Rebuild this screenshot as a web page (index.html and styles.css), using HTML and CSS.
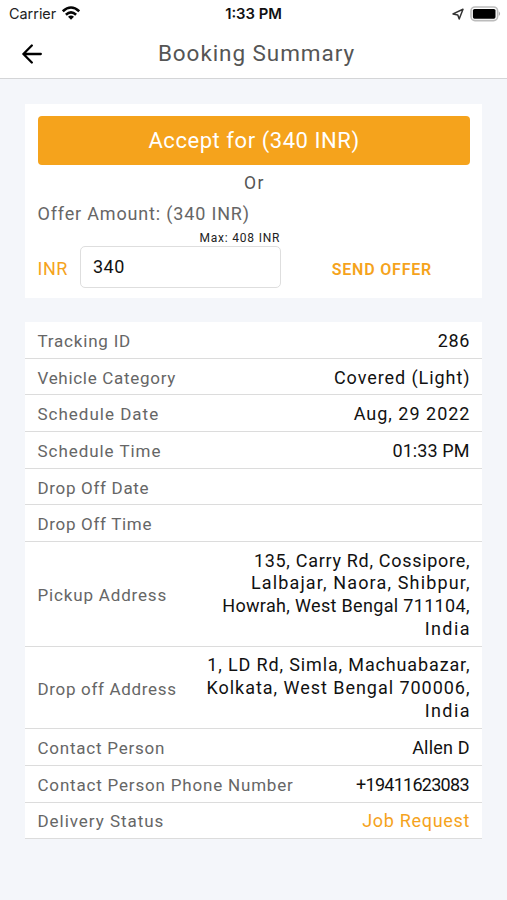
FILE: index.html
```
<!DOCTYPE html>
<html lang="en">
<head>
<meta charset="utf-8">
<meta name="viewport" content="width=device-width, initial-scale=1">
<title>Booking Summary</title>
<link rel="stylesheet" href="styles.css">
</head>
<body>
<header class="top">
  <div class="status">
    <div class="carrier"><span class="carrier-name">Carrier</span>
      <svg class="wifi" viewBox="0 0 18 14"><g fill="none" stroke="#050505" stroke-width="2.6"><path d="M.8 5.3Q9-2.3 17.2 5.3"/><path d="M3.9 8.7Q9 4.1 14.1 8.7"/></g><path d="M6 10.7Q9 8.3 12 10.7L9 13.7Z" fill="#050505"/></svg>
    </div>
    <div class="clock"><span>1:33 PM</span></div>
    <div class="indicators">
      <svg class="location" viewBox="0 0 12 12"><path d="M1 5.9L11 1.2L7.2 10.9L5.8 6.9Z" fill="none" stroke="#333" stroke-width="1.5" stroke-linejoin="round"/></svg>
      <svg class="battery" viewBox="0 0 31 16"><rect x="1" y="1" width="26.6" height="13.6" rx="4" fill="#fff" stroke="#bcbcbc" stroke-width="1.6"/><rect x="2.9" y="2.9" width="22.6" height="9.8" rx="1.6" fill="#000"/><path d="M28.8 5.3Q31.4 7.7 28.8 10.1Z" fill="#aaa"/></svg>
    </div>
  </div>
  <div class="nav">
    <svg class="back" viewBox="0 0 20 20"><path d="M18.8 10H1.4M9.8 1.5L1.4 10L9.8 18.5" fill="none" stroke="#000" stroke-width="2.3" stroke-linecap="round" stroke-linejoin="round"/></svg>
    <h1><span>Booking Summary</span></h1>
  </div>
</header>
<main>
  <section class="offer">
    <button class="accept"><span>Accept for (340 INR)</span></button>
    <p class="or"><span>Or</span></p>
    <p class="amount"><span>Offer Amount: (340 INR)</span></p>
    <p class="max"><span>Max: 408 INR</span></p>
    <div class="bid">
      <div class="currency"><span>INR</span></div>
      <div class="field"><span>340</span></div>
      <div class="send"><span>SEND OFFER</span></div>
    </div>
  </section>
  <section class="details">
    <div class="row tracking"><span class="label">Tracking ID</span><span class="value">286</span></div>
    <div class="row vehicle"><span class="label">Vehicle Category</span><span class="value">Covered (Light)</span></div>
    <div class="row date"><span class="label">Schedule Date</span><span class="value">Aug, 29 2022</span></div>
    <div class="row time"><span class="label">Schedule Time</span><span class="value">01:33 PM</span></div>
    <div class="row drop"><span class="label">Drop Off Date</span></div>
    <div class="row drop"><span class="label">Drop Off Time</span></div>
    <div class="row pickup"><span class="label">Pickup Address</span><div class="lines"><span>135, Carry Rd, Cossipore,</span><span>Lalbajar, Naora, Shibpur,</span><span>Howrah, West Bengal 711104,</span><span>India</span></div></div>
    <div class="row dropoff"><span class="label">Drop off Address</span><div class="lines"><span>1, LD Rd, Simla, Machuabazar,</span><span>Kolkata, West Bengal 700006,</span><span>India</span></div></div>
    <div class="row person"><span class="label">Contact Person</span><span class="value">Allen D</span></div>
    <div class="row phone"><span class="label">Contact Person Phone Number</span><span class="value">+19411623083</span></div>
    <div class="row delivery"><span class="label">Delivery Status</span><span class="value job">Job Request</span></div>
  </section>
</main>
</body>
</html>
```
FILE: styles.css
```
* { box-sizing: border-box; }
body { margin: 0; background: #f4f6fa; font-family: Roboto, "Liberation Sans", sans-serif; color: #111; }
p, h1 { margin: 0; font-weight: 400; }

/* The negative margin drops the tracking after the last letter. */
span { --track: 0px; white-space: nowrap; letter-spacing: var(--track); margin-right: calc(-1 * var(--track)); }

.top { height: 79px; background: #fff; border-bottom: 1.5px solid #d4d5d7; }
.status { display: grid; grid-template-columns: 1fr 1fr 1fr; height: 28px; align-items: center; padding: 0 6px 0 9px; }
.carrier { display: flex; align-items: center; gap: 6px; font: 14.4px/28px Inter, sans-serif; color: #222; }
.wifi { width: 18px; height: 14px; margin-top: -2px; }
.clock { text-align: center; font: 600 14.8px/28px Inter, sans-serif; margin-left: -3px; }
.indicators { display: flex; justify-content: flex-end; align-items: center; gap: 6px; }
.location { width: 12px; height: 12px; }
.battery { width: 31px; height: 16px; margin-top: -1px; }
.nav { display: grid; grid-template-columns: 60px 1fr 55px; height: 50px; align-items: center; }
.back { width: 20px; height: 20px; margin: 1px 0 0 22px; }
h1 { text-align: center; font-size: 22.5px; line-height: 51px; color: #555; }
h1 span { --track: .93px; }

main { padding: 25px 25px 0; }
.offer { height: 194px; padding: 12px 12px 0 12.5px; background: #fff; }
.accept { display: block; width: 100%; height: 49px; border: 0; border-radius: 4px; background: #f5a31c; color: #fff; font: 22px/49px Roboto, sans-serif; padding: 0; }
.accept span { --track: .55px; }
.or { text-align: center; font-size: 17.5px; line-height: 37px; color: #555; }
.or span { --track: 1.5px; }
.amount { font-size: 18px; line-height: 24px; color: #666; }
.amount span { --track: .83px; }
.max { width: 242px; text-align: right; font-size: 12px; line-height: 20px; color: #222; position: relative; top: 2px; }
.max span { --track: .8px; }
.bid { display: grid; grid-template-columns: 42.5px 201px 1fr; align-items: center; }
.currency { color: #f5a31c; font-size: 18px; padding-top: 3px; }
.currency span { --track: .5px; }
.field { height: 42px; border: 1.5px solid #dedede; border-radius: 5px; padding-left: 12px; font-size: 18px; line-height: 40px; }
.field span { --track: .5px; }
.send { text-align: center; color: #f5a31c; font-size: 16px; font-weight: 600; padding: 4px 0 0 12px; }
.send span { --track: .8px; }

.details { margin-top: 24px; background: #fff; }
.row { display: flex; justify-content: space-between; align-items: center; height: 36.7px; padding: 1px 12.5px 0; border-bottom: 1.5px solid #dcdcdc; }
.label { font-size: 17px; color: #666; padding-top: 1px; }
.value, .lines { font-size: 18px; }
.pickup { height: 105px; }
.dropoff { height: 82px; }
.lines { display: flex; flex-direction: column; align-items: flex-end; line-height: 22.8px; padding-top: 1px; }
.job { color: #f5a31c; }

.tracking .label { --track: .8px; }
.tracking .value { --track: .75px; }
.vehicle .label { --track: .7px; }
.vehicle .value { --track: .93px; }
.date .label { --track: 1px; }
.date .value { --track: 1px; }
.time .label { --track: .95px; }
.time .value { --track: .1px; }
.drop .label { --track: .68px; }
.pickup .label { --track: .83px; }
.pickup .lines span:nth-child(1) { --track: .7px; }
.pickup .lines span:nth-child(2) { --track: 1.15px; }
.pickup .lines span:nth-child(3) { --track: .33px; }
.dropoff .label { --track: .67px; }
.dropoff .lines span:nth-child(1) { --track: .86px; }
.dropoff .lines span:nth-child(2) { --track: .97px; }
.lines span:last-child { --track: 1.4px; }
.person .label { --track: .77px; }
.person .value { --track: .17px; }
.phone .label { --track: .81px; }
.phone .value { --track: -.73px; }
.delivery .label { --track: .96px; }
.delivery .value { --track: .7px; }
```
